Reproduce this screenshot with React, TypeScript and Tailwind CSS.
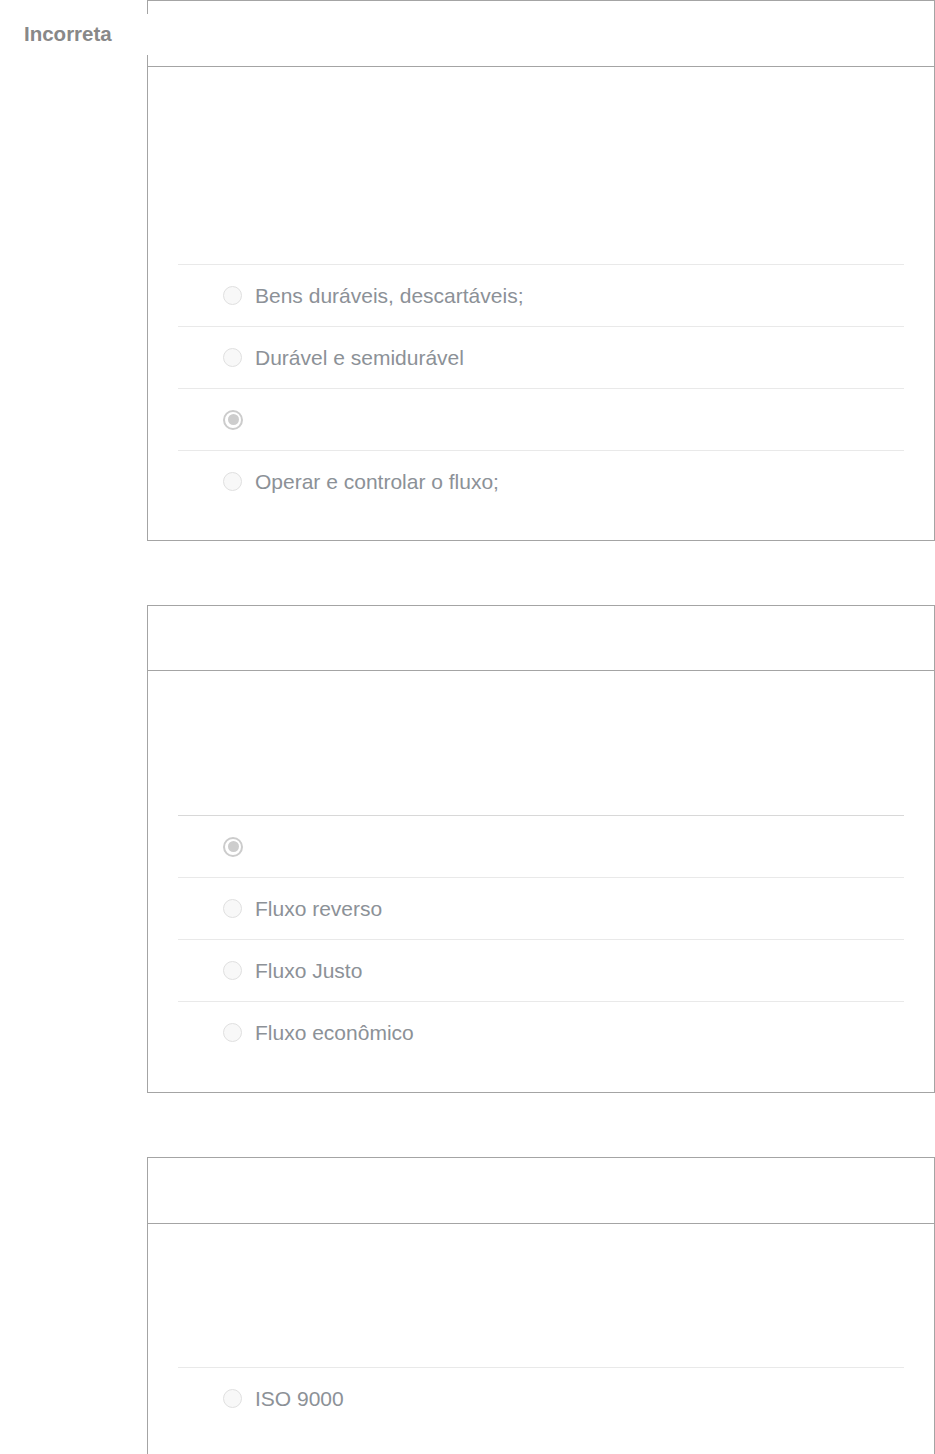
import React from "react";

type Opt = { text: string; checked?: boolean };

function Radio({ checked }: { checked?: boolean }) {
  if (checked) {
    return (
      <span className="flex h-[20px] w-[20px] shrink-0 items-center justify-center rounded-full border-2 border-[#cccccc] bg-white">
        <span className="h-[11px] w-[11px] rounded-full bg-[#cdcdcd]" />
      </span>
    );
  }
  return <span className="h-[19px] w-[19px] shrink-0 rounded-full border border-[#e0e0e0] bg-[#f8f8f8]" />;
}

function Card({
  header,
  blank,
  options,
  pb,
  firstDark,
}: {
  header: string;
  blank: string;
  options: Opt[];
  pb: string;
  firstDark?: boolean;
}) {
  return (
    <div className="border border-[#a4a4a4] bg-white">
      <div className={`${header} border-b border-[#a4a4a4]`} />
      <div className={`px-[30px] ${pb}`}>
        <div className={blank} />
        {options.map((o, i) => (
          <div
            key={i}
            className={`flex h-[62px] items-center gap-[13px] border-t pl-[45px] ${
              i === 0 && firstDark ? "border-[#d8d8d8]" : "border-[#e9e9e9]"
            }`}
          >
            <Radio checked={o.checked} />
            <span className="text-[21px] leading-none text-[#8c9197]">{o.text}</span>
          </div>
        ))}
      </div>
    </div>
  );
}

export default function App() {
  return (
    <div
      className="relative flex min-h-[1454px] w-full bg-white"
      style={{ fontFamily: '"Liberation Sans", Arial, sans-serif' }}
    >
      <div className="absolute left-0 top-[14px] z-10 flex h-[41px] w-[148px] items-center bg-white pl-[24px]">
        <span className="text-[20.5px] font-bold text-[#888888]">Incorreta</span>
      </div>
      <div className="w-[147px] shrink-0" />
      <div className="flex flex-1 flex-col gap-[64px]">
        <Card
          header="h-[66px]"
          blank="h-[197px]"
          pb="pb-[28px]"
          options={[
            { text: "Bens duráveis, descartáveis;" },
            { text: "Durável e semidurável" },
            { text: "", checked: true },
            { text: "Operar e controlar o fluxo;" },
          ]}
        />
        <Card
          header="h-[65px]"
          blank="h-[144px]"
          pb="pb-[29px]"
          firstDark
          options={[
            { text: "", checked: true },
            { text: "Fluxo reverso" },
            { text: "Fluxo Justo" },
            { text: "Fluxo econômico" },
          ]}
        />
        <Card
          header="h-[66px]"
          blank="h-[143px]"
          pb="pb-[30px]"
          options={[{ text: "ISO 9000" }]}
        />
      </div>
    </div>
  );
}
